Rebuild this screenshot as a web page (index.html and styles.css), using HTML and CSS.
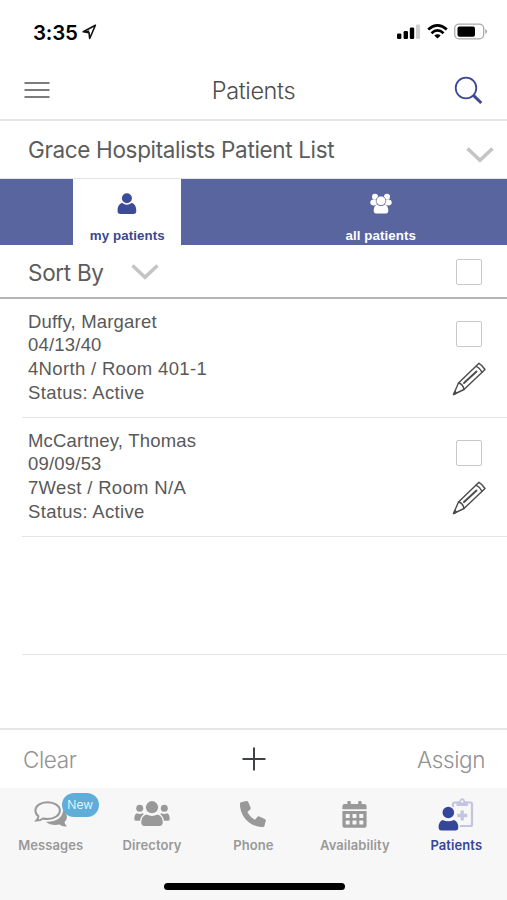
FILE: index.html
```html
<!DOCTYPE html>
<html lang="en">
<head>
<meta charset="utf-8">
<title>Patients</title>
<link rel="stylesheet" href="styles.css">
</head>
<body>
<svg width="0" height="0" class="defs">
  <symbol id="pencil" viewBox="0 0 36 36">
    <g fill="none" stroke="#4c4c4c" stroke-width="1.4" stroke-linejoin="round" stroke-linecap="round">
      <path d="M2.5 33.5 7.5 22 28 2.3Q31 4 34 8.500L13 28.5Z"/>
      <path d="M7.5 22Q12 23 13 28.5M25 5.2Q29 7 31 11.300"/>
      <path d="M13 22 25.500 10.500" stroke-width="1.900"/>
      <path d="M2.5 33.5 4 30.5 5.5 32Z" fill="#4c4c4c"/>
    </g>
  </symbol>
</svg>
<div class="screen">
  <header class="status">
    <div class="clock">
      <span class="time">3:35</span>
      <svg width="15" height="16" viewBox="0 0 15 16"><path d="M13.4 1.3 1.2 7.8 7 8.6 7.7 14.5Z" fill="none" stroke="#111" stroke-width="1.6" stroke-linejoin="round"/><path d="M1.2 7.8 7.2 6.2 7 8.6Z" fill="#111"/></svg>
    </div>
    <svg class="signals" width="92" height="18" viewBox="0 0 92 18">
      <rect x="0" y="10.500" width="4.4" height="5.500" rx="1.3"/>
      <rect x="6.6" y="8" width="4.4" height="8" rx="1.3"/>
      <rect x="12.8" y="4.5" width="4.4" height="11.5" rx="1.3"/>
      <rect x="19" y="1.5" width="4" height="14.5" rx="1.3" fill="#d0d0d0"/>
      <g fill="none" stroke="#000" stroke-width="2.7"><path d="M31.2 6.5Q40.500 -1.7 49.8 6.5"/><path d="M34.5 10.2Q40.500 4.7 46.5 10.2"/></g>
      <path d="M37.3 12.6Q40.500 9.9 43.7 12.6L40.500 15.5Z"/>
      <rect x="57.7" y="1.2" width="29" height="14.6" rx="4.3" fill="none" stroke="#aaa" stroke-width="1.3"/>
      <rect x="60.500" y="3.4" width="17.5" height="10.3" rx="2"/>
      <path d="M88.300 5.8Q92 8.4 88.300 11Z" fill="#aaa"/>
    </svg>
  </header>

  <nav class="nav">
    <svg width="26" height="18" viewBox="0 0 26 18"><path d="M.5 2H25.500M.5 9H25.500M.5 16H25.500" stroke="#7c7c7c" stroke-width="2"/></svg>
    <h1>Patients</h1>
    <svg width="29" height="29" viewBox="0 0 29 29" fill="none" stroke="#3d4a91"><circle cx="12" cy="12" r="10.3" stroke-width="1.8"/><path d="M19.2 19.2 27.3 27" stroke-width="3"/></svg>
  </nav>

  <div class="list-name">
    <span class="list-label">Grace Hospitalists Patient List</span>
    <svg class="chev" width="28" height="16" viewBox="0 0 28 16"><path d="M1.5 1.5 14 13.2 26.5 1.5"/></svg>
  </div>

  <div class="scope">
    <div class="scope-cell"><div class="scope-tab active">
      <svg width="20" height="22" viewBox="0 0 20 22" fill="#3c4c97"><circle cx="9.9" cy="5.2" r="5"/><path d="M5 9.8Q9.9 13.8 14.8 9.8C18 11 19.3 13.8 19.3 18Q19.3 21 16.4 21H3.4Q.5 21 .5 18C.5 13.8 1.8 11 5 9.8Z"/></svg>
      <span>my patients</span>
    </div></div>
    <div class="scope-cell"><div class="scope-tab all">
      <svg width="22" height="22" viewBox="0 0 22 22" fill="#fff"><circle cx="5" cy="3.800" r="3"/><circle cx="17" cy="3.800" r="3"/><ellipse cx="3.8" cy="9.5" rx="3.5" ry="2.9"/><ellipse cx="18.2" cy="9.5" rx="3.5" ry="2.9"/><path d="M6.9 11.5Q11 14.3 15.1 11.5Q18.3 13 18.3 17.5Q18.3 20.5 16 20.5H6Q3.7 20.5 3.7 17.5Q3.7 13 6.9 11.5Z"/><circle cx="11" cy="7.8" r="4.8" stroke="#58659f" stroke-width=".7"/></svg>
      <span>all patients</span>
    </div></div>
  </div>

  <div class="sort">
    <span class="sort-label">Sort By</span>
    <svg class="chev" width="28" height="16" viewBox="0 0 28 16"><path d="M1.5 1.5 14 13.2 26.5 1.5"/></svg>
    <i class="box"></i>
  </div>

  <main class="patients">
    <article class="patient">
      <div class="info"><p>Duffy, Margaret</p><p>04/13/40</p><p class="room">4North / Room 401-1</p><p class="room">Status: Active</p></div>
      <div class="actions"><i class="box"></i><svg width="36" height="36"><use href="#pencil"/></svg></div>
    </article>
    <article class="patient">
      <div class="info"><p>McCartney, Thomas</p><p>09/09/53</p><p class="room">7West / Room N/A</p><p class="room">Status: Active</p></div>
      <div class="actions"><i class="box"></i><svg width="36" height="36"><use href="#pencil"/></svg></div>
    </article>
    <div class="patient empty"></div>
  </main>

  <div class="toolbar">
    <span class="clear">Clear</span>
    <svg width="24" height="24" viewBox="0 0 24 24"><path d="M.5 12H23.5M12 .5V23.5" stroke="#3f4246" stroke-width="2"/></svg>
    <span class="assign">Assign</span>
  </div>

  <footer class="tabbar">
    <div class="tabs">
      <div class="tab messages">
        <div class="icon">
          <svg width="34" height="30" viewBox="0 0 34 30"><path d="M29 10C34 14 34 19 30.500 22Q30.5 24.5 33 26.3Q28.5 27 25.5 24.5Q17 26 12 21.7C22 22 29 18 29 10Z" fill="#999"/><path d="M13.500 2.2C6.500 2.2 1.4 6 1.4 10.500Q1.4 13.9 4.4 16.3Q4.2 19 2.5 20.6Q6.5 20.6 9 18.500Q11.2 19 13.500 19C20.500 19 25.9 15.300 25.9 10.500S20.500 2.2 13.500 2.2Z" fill="#f7f7f7" stroke="#999" stroke-width="2"/></svg>
          <b class="badge">New</b>
        </div>
        <span>Messages</span>
      </div>
      <div class="tab directory">
        <div class="icon"><svg width="36" height="30" viewBox="0 0 36 30" fill="#999"><circle cx="18" cy="7.2" r="6.1"/><circle cx="5.7" cy="8.3" r="3.5"/><circle cx="30.3" cy="8.3" r="3.5"/><path d="M12.5 14.5Q18 17.4 23.5 14.5Q28.5 16 28.8 22Q28.8 26 25.5 26H10.5Q7.2 26 7.2 22Q7.5 16 12.5 14.5Z"/><path d="M2.8 13.2Q5.5 14.8 8.8 13.2L9.8 14.2Q6.5 16.5 6 20.7H1.8Q.3 20.7.3 19Q.3 14.5 2.8 13.2ZM33.2 13.2Q30.5 14.8 27.2 13.2L26.2 14.2Q29.5 16.5 30 20.7H34.2Q35.7 20.7 35.7 19Q35.7 14.5 33.2 13.2Z"/></svg></div>
        <span>Directory</span>
      </div>
      <div class="tab phone">
        <div class="icon"><svg width="28" height="30" viewBox="0 0 28 30" fill="#999"><path d="M2.2 2.2 7.3 1.1Q8.6.9 9.2 2.1L11.6 7.6Q12 8.7 11.1 9.6L8.4 12Q11.1 17.2 16 19.7L18.3 16.9Q19.1 16 20.2 16.5L25.8 18.9Q27 19.5 26.8 20.7L25.5 25.8Q25.2 27 24 27C11 27 1 16.5.9 3.9Q.9 2.5 2.2 2.2Z"/></svg></div>
        <span>Phone</span>
      </div>
      <div class="tab availability">
        <div class="icon"><svg width="25" height="30" viewBox="0 0 25 30"><path d="M.4 9.2V6.3Q.4 4 2.8 4H5.4V1.8Q5.4.9 6.3.9H7.8Q8.8.9 8.8 1.8V4H16.2V1.8Q16.2.9 17.2.9H18.7Q19.6.9 19.6 1.8V4H22.2Q24.6 4 24.6 6.3V9.2ZM.4 11H24.6V25.2Q24.6 27.8 22 27.8H3Q.4 27.8.4 25.2Z" fill="#999"/><g fill="#f7f7f7"><rect x="3.7" y="14" width="4" height="3.9" rx=".6"/><rect x="10.5" y="14" width="4" height="3.9" rx=".6"/><rect x="17.3" y="14" width="4" height="3.9" rx=".6"/><rect x="3.7" y="20.6" width="4" height="3.9" rx=".6"/><rect x="10.5" y="20.6" width="4" height="3.9" rx=".6"/><rect x="17.3" y="20.6" width="4" height="3.9" rx=".6"/></g></svg></div>
        <span>Availability</span>
      </div>
      <div class="tab current">
        <div class="icon"><svg width="36" height="34" viewBox="0 0 36 34"><g fill="none" stroke="#c3c4e0"><path d="M15 9V6Q15 4.5 16.5 4.5H32.5Q34 4.5 34 6V26.500Q34 28 32.5 28H22" stroke-width="2.2"/><path d="M24.200 12.500V22.500M19.200 17.500H29.200" stroke-width="3.3"/></g><path d="M18.500 5Q19 3.500 21.5 3.300Q21.8.2 24.200.2T26.900 3.3Q29.400 3.500 29.900 5V8H18.5Z" fill="#c3c4e0"/><circle cx="24.200" cy="3.4" r="1.2" fill="#f7f7f7"/><circle cx="10.3" cy="14.5" r="6.7" fill="#f7f7f7"/><circle cx="10.3" cy="14.5" r="5.8" fill="#35469a"/><path d="M4.5 22Q10.3 24.5 16 22Q20 23.5 20.3 29Q20.3 32.5 17.5 32.5H3.5Q.6 32.5.6 29Q.8 23.5 4.5 22Z" fill="#35469a"/></svg></div>
        <span>Patients</span>
      </div>
    </div>
    <div class="home"></div>
  </footer>
</div>
</body>
</html>
```
FILE: styles.css
```css
* { box-sizing: border-box; }
body { margin: 0; background: #fff; font-family: Inter, "Liberation Sans", sans-serif; color: #5c5c5c; }
svg { display: block; flex: none; }
h1, p { margin: 0; font-weight: 400; }
.defs { position: absolute; }
.screen { width: 507px; height: 900px; display: flex; flex-direction: column; overflow: hidden; }
.screen > * { flex: none; }

.status { height: 60px; padding: 0 18px 0 33px; display: flex; justify-content: space-between; align-items: flex-start; color: #000; }
.clock { display: flex; gap: 4px; padding-top: 21px; }
.time { font-size: 20.5px; line-height: 24px; font-weight: 600; letter-spacing: -.2px; width: 45px; white-space: nowrap; }
.clock svg { margin-top: 3px; }
.signals { margin-top: 23px; }

.nav { height: 61px; border-bottom: 2px solid #e6e6e6; padding: 0 24px; display: flex; justify-content: space-between; align-items: center; }
.nav h1 { font-size: 23.5px; line-height: 30px; font-weight: 300; letter-spacing: -.4px; color: #4c4c4c; margin: 3px 0 0 3px; }
.nav svg:last-child { margin-top: 2px; }

.list-name { height: 58px; padding: 0 13px 0 28px; border-bottom: 1px solid #e4e4e8; display: flex; justify-content: space-between; align-items: center; }
.list-label { font-size: 22.5px; letter-spacing: -.35px; white-space: nowrap; }
.list-name .chev { margin-top: 10px; }
.chev { fill: none; stroke: #c4c4c4; stroke-width: 3.6; }

.scope { height: 66px; background: #58659f; display: grid; grid-template-columns: 1fr 1fr; }
.scope-cell { display: flex; justify-content: center; }
.scope-tab { width: 108px; margin-left: 1px; padding-top: 14px; display: flex; flex-direction: column; align-items: center; gap: 13px; font: bold 13.3px/16px "Liberation Sans", sans-serif; letter-spacing: .08px; color: #fff; }
.scope-tab.active { background: #fff; color: #3c4791; }

.sort { height: 54px; border-bottom: 2px solid #b5b5b5; padding: 2px 25px 0 28px; display: flex; align-items: center; }
.sort-label { font-size: 22.5px; width: 103px; letter-spacing: -.3px; }
.sort .box { margin-left: auto; }
.box { display: block; width: 26px; height: 26px; border: 1.5px solid #c8c8c8; border-radius: 2px; }

.patient { height: 119px; margin-left: 22px; padding: 11px 20px 0 6px; border-bottom: 1px solid #e5e5e5; display: flex; justify-content: space-between; }
.patient.empty { height: 118px; }
.info { font: 18.5px/24px "Liberation Sans", sans-serif; letter-spacing: .2px; color: #595959; }
.info p:nth-child(2) { margin-top: -1px; }
.info .room { letter-spacing: .33px; }
.actions { display: flex; flex-direction: column; align-items: center; gap: 14px; padding-top: 11px; }

.toolbar { margin-top: auto; height: 60px; border-top: 2px solid #e6e6e6; padding: 0 22px; display: grid; grid-template-columns: 1fr 24px 1fr; align-items: center; font-size: 22.5px; font-weight: 300; letter-spacing: -.4px; color: #929292; }
.clear { padding-left: 1px; }
.assign { text-align: right; }

.tabbar { height: 112px; background: #f7f7f7; display: flex; flex-direction: column; align-items: center; }
.tabs { width: 100%; display: grid; grid-template-columns: repeat(5, 1fr); }
.tab { display: flex; flex-direction: column; align-items: center; font-size: 13px; line-height: 16px; font-weight: 600; letter-spacing: .08px; color: #999; }
.icon { position: relative; height: 49px; padding-top: 12px; }
.current { color: #35469a; }
.current .icon { padding-top: 10px; }
.badge { position: absolute; left: 28px; top: 5px; width: 37px; height: 24px; border-radius: 12px; background: #5faed9; color: #fff; font-size: 12px; line-height: 24px; font-weight: 300; text-align: center; }
.home { width: 181px; height: 7px; border-radius: 4px; background: #000; margin: 30px 0 0 2px; }
```
